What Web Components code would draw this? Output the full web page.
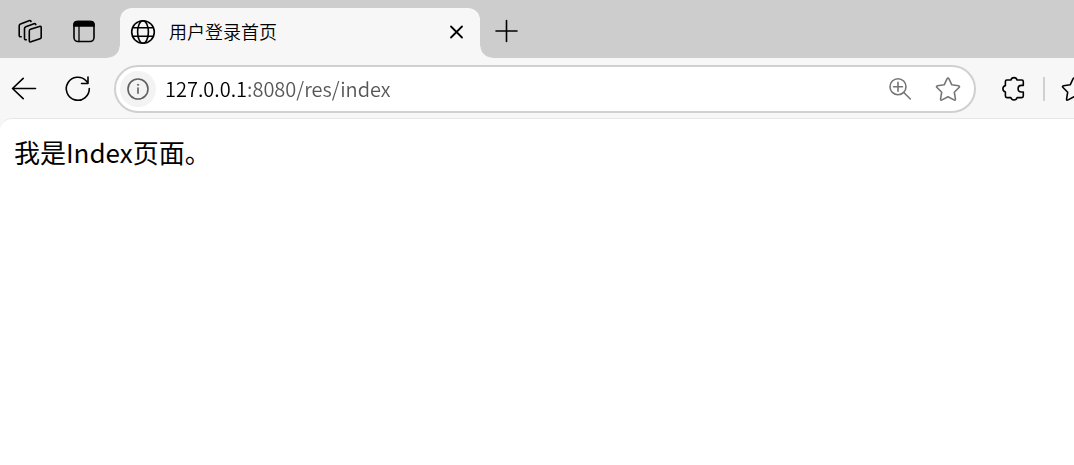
<!DOCTYPE html>
<html lang="zh-CN">
<head>
<meta charset="utf-8">
<title>用户登录首页</title>
<style>
html, body { margin: 0; height: 100%; }
body { font-family: "Noto Sans", "Noto Sans CJK SC", sans-serif; background: #f7f7f7; overflow: hidden; }
</style>
</head>
<body>
<browser-window>
  <tab-strip slot="tabs"><browser-tab>用户登录首页</browser-tab></tab-strip>
  <tool-bar slot="toolbar"><address-bar value="127.0.0.1:8080/res/index"></address-bar></tool-bar>
  <page-view>我是Index页面。</page-view>
</browser-window>
<script>
const ICONS = {
  workspaces: '<path d="M12.5 10.2 21.5 7.4Q23.2 7 23.2 8.6V18.2Q23.2 19.4 22 19.8L13 22.8Q11.3 23.3 11.3 21.8V12Q11.3 10.6 12.5 10.2Z"/><path d="M8.3 20.7Q6.5 21.2 6.5 19.6V9.6Q6.5 8.2 7.8 7.7L16 4.8Q17.4 4.3 17.8 5.6"/><path d="M3.2 17.8Q1.2 18 1.2 16.4V6.8Q1.2 5.4 2.5 4.9L11 1.7Q12.5 1.2 13 2.4"/>',
  tabs: '<rect x="2" y="2.5" width="20" height="20" rx="4"/><path fill="currentColor" d="M2 7V5.5a3 3 0 0 1 3-3h14a3 3 0 0 1 3 3V7Z"/><path stroke-width="1.3" d="M7 7.5v15"/>',
  globe: '<circle cx="12" cy="12" r="11.3"/><ellipse cx="12" cy="12" rx="5.4" ry="11.3"/><path d="M1.6 7.7h20.8M1.6 16.3h20.8"/>',
  close: '<path stroke-width="1.8" d="m7 6.5 11 11M18 6.5l-11 11"/>',
  plus: '<path d="M12.5 1.5v21M2 12h21"/>',
  back: '<path d="M23.5 11.5H.5M11.2 1.3.5 11.5l10.7 10.2"/>',
  reload: '<path d="M23.3 11.5A11.5 11.5 0 1 1 20.3 4L22 6M22 0v6.5h-6.5"/>',
  info: '<circle cx="12" cy="12" r="10"/><path d="M12 11v5.3"/><circle cx="12" cy="7.8" r=".7" fill="currentColor" stroke-width=".6"/>',
  zoom: '<circle cx="10" cy="9.7" r="8"/><path d="M10 5.2v9M5.5 9.7h9M15.8 15.5l6.5 6.5"/>',
  star: '<path d="m11 1.9Q12 0 13 1.9L15.8 7.8 22.4 8.8Q24.3 9.2 23 10.5L18.3 15.2 19.4 21.8Q19.6 23.8 17.9 22.9L12 19.8 6.1 22.9Q4.4 23.8 4.6 21.8L5.7 15.2 1 10.5Q-.3 9.2 1.6 8.8L8.2 7.8Z"/>',
  puzzle: '<path d="M4.9 3H8.9A3.2 3.2 0 0 1 15.1 3H19.8Q21.3 3 21.3 4.5V8.4H19.4A3.3 3.3 0 0 0 19.4 15H21.3V19.1Q21.3 20.6 19.8 20.6H15.1A3.2 3.2 0 0 1 8.9 20.6H4.9Q3.4 20.6 3.4 19.1V15A3.3 3.3 0 0 1 3.4 8.6V4.5Q3.4 3 4.9 3Z"/>'
};

class UiIcon extends HTMLElement {
  connectedCallback() {
    this.attachShadow({ mode: 'open' }).innerHTML = `
      <style>
        :host { display: block; width: 24px; height: 24px; flex: none; }
        svg { display: block; width: 100%; height: 100%; overflow: visible; }
      </style>
      <svg viewBox="0 0 24 24" fill="none" stroke="currentColor" stroke-width="1.6" stroke-linecap="round" stroke-linejoin="round" aria-hidden="true">${ICONS[this.getAttribute('name')]}</svg>`;
  }
}

class IconButton extends HTMLElement {
  connectedCallback() {
    this.attachShadow({ mode: 'open' }).innerHTML = `
      <style>
        :host { display: block; flex: none; }
        button { display: flex; align-items: center; justify-content: center; width: 36px; height: 36px; padding: 0; border: 0; border-radius: 18px; background: var(--button-fill, transparent); color: inherit; }
      </style>
      <button type="button" aria-label="${this.getAttribute('label')}"><ui-icon name="${this.getAttribute('icon')}"></ui-icon></button>`;
  }
}

class BrowserTab extends HTMLElement {
  connectedCallback() {
    this.attachShadow({ mode: 'open' }).innerHTML = `
      <style>
        :host { display: flex; position: relative; align-items: center; box-sizing: border-box; width: 360px; height: 50px; padding: 0 6px 2px 11px; border-radius: 12px 12px 0 0; background: #f7f7f7; }
        :host::before, :host::after { content: ""; position: absolute; bottom: 0; width: 12px; height: 12px; }
        :host::before { right: 100%; background: radial-gradient(circle at 0 0, transparent 11px, #f7f7f7 12px); }
        :host::after { left: 100%; background: radial-gradient(circle at 100% 0, transparent 11px, #f7f7f7 12px); }
        .title { flex: 1; margin-left: 14px; padding-bottom: 2px; font: 350 18px/24px "Noto Sans CJK SC", sans-serif; color: #000; }
      </style>
      <ui-icon name="globe"></ui-icon>
      <span class="title"><slot></slot></span>
      <icon-button icon="close" label="关闭标签页"></icon-button>`;
  }
}

class TabStrip extends HTMLElement {
  connectedCallback() {
    this.attachShadow({ mode: 'open' }).innerHTML = `
      <style>
        :host { display: flex; align-items: center; box-sizing: border-box; height: 58px; padding: 8px 0 0 12px; background: #cdcdcd; color: #000; }
        .tools { display: flex; gap: 18px; margin-right: 18px; padding-bottom: 4px; }
        .new { margin-left: 8px; padding-bottom: 4px; }
      </style>
      <div class="tools">
        <icon-button icon="workspaces" label="工作区"></icon-button>
        <icon-button icon="tabs" label="标签操作菜单"></icon-button>
      </div>
      <slot></slot>
      <icon-button class="new" icon="plus" label="新建标签页"></icon-button>`;
  }
}

class AddressBar extends HTMLElement {
  connectedCallback() {
    this.attachShadow({ mode: 'open' }).innerHTML = `
      <style>
        :host { display: flex; flex: 1; min-width: 0; align-items: center; box-sizing: border-box; height: 48px; padding: 0 8px 0 4px; border: 2px solid #d0d0d0; border-radius: 24px; background: #fff; color: #767676; }
        .site { --button-fill: #f3f3f3; color: #606060; }
        input { flex: 1; min-width: 0; height: 32px; margin: 0 8px 0 9px; padding: 0; border: 0; outline: 0; color: #555; font: 350 20px/32px "Noto Sans CJK SC", sans-serif;
          background: linear-gradient(90deg, #000 82px, #555 82px) text; -webkit-text-fill-color: transparent; }
        .tail { display: flex; gap: 12px; }
      </style>
      <icon-button class="site" icon="info" label="查看站点信息"></icon-button>
      <input type="text" aria-label="地址栏" spellcheck="false" value="${this.getAttribute('value')}">
      <div class="tail">
        <icon-button icon="zoom" label="缩放"></icon-button>
        <icon-button icon="star" label="收藏此页"></icon-button>
      </div>`;
  }
}

class ToolBar extends HTMLElement {
  connectedCallback() {
    this.attachShadow({ mode: 'open' }).innerHTML = `
      <style>
        :host { display: flex; align-items: center; box-sizing: border-box; height: 60px; padding: 2px 0 0 6px; background: #f7f7f7; color: #000; }
        .nav { display: flex; gap: 18px; margin-right: 18px; }
        .extras { display: flex; flex: none; align-items: center; width: 78px; margin-left: 20px; overflow: hidden; }
        .rule { flex: none; width: 2px; height: 24px; margin: 0 11px; background: #d0d0d0; }
      </style>
      <div class="nav">
        <icon-button icon="back" label="后退"></icon-button>
        <icon-button icon="reload" label="刷新"></icon-button>
      </div>
      <slot></slot>
      <div class="extras">
        <icon-button icon="puzzle" label="扩展"></icon-button>
        <span class="rule"></span>
        <icon-button icon="star" label="收藏夹"></icon-button>
      </div>`;
  }
}

class PageView extends HTMLElement {
  connectedCallback() {
    this.attachShadow({ mode: 'open' }).innerHTML = `
      <style>
        :host { display: block; flex: 1; box-sizing: border-box; padding: 13px 14px; border-top: 1px solid #e6e6e6; border-radius: 12px 0 0 0; background: #fff; }
        p { margin: 0; font: 26px/40px "Noto Sans CJK SC", sans-serif; color: #000; }
      </style>
      <p><slot></slot></p>`;
  }
}

class BrowserWindow extends HTMLElement {
  connectedCallback() {
    this.attachShadow({ mode: 'open' }).innerHTML = `
      <style>:host { display: flex; flex-direction: column; min-height: 100vh; }</style>
      <slot name="tabs"></slot><slot name="toolbar"></slot><slot></slot>`;
  }
}

customElements.define('ui-icon', UiIcon);
customElements.define('icon-button', IconButton);
customElements.define('browser-tab', BrowserTab);
customElements.define('tab-strip', TabStrip);
customElements.define('address-bar', AddressBar);
customElements.define('tool-bar', ToolBar);
customElements.define('page-view', PageView);
customElements.define('browser-window', BrowserWindow);
</script>
</body>
</html>
